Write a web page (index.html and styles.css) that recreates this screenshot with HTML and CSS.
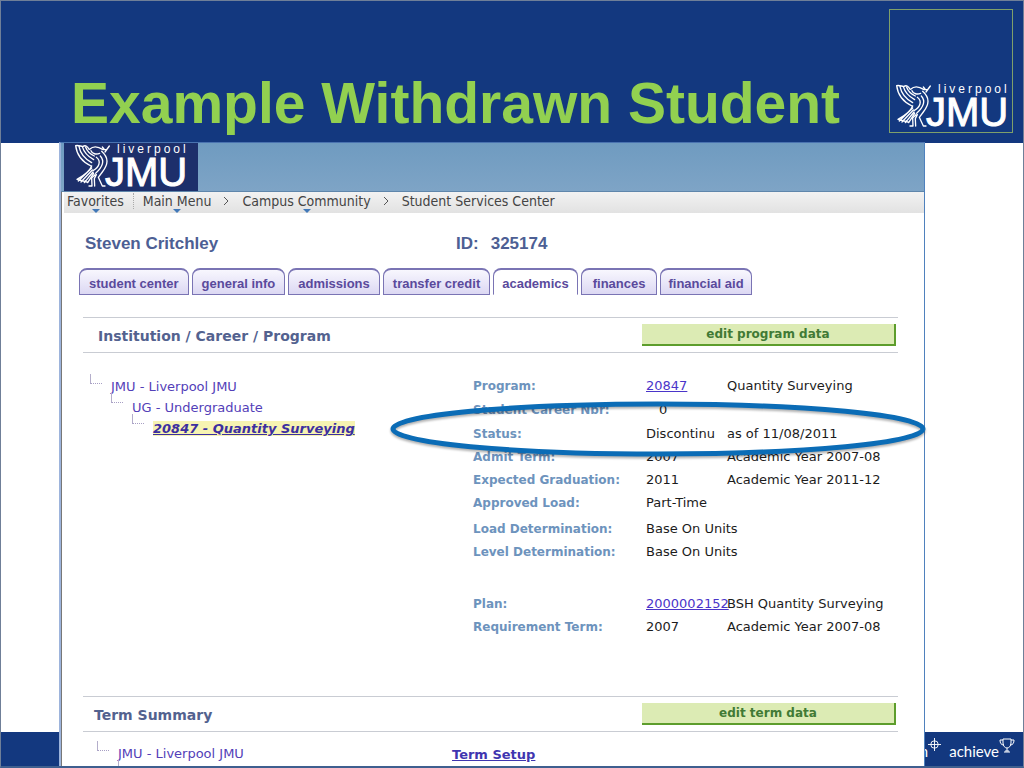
FILE: index.html
```html
<!DOCTYPE html>
<html lang="en">
<head>
    <meta charset="UTF-8">
    <meta name="viewport" content="width=device-width, initial-scale=1.0">
    <title>Example Withdrawn Student</title>
    <link rel="stylesheet" href="styles.css">
</head>
<body>
    <div class="slide">
        <header class="slide-header">
            <h1>Example Withdrawn Student</h1>
            <div class="logo-box">
                <svg class="logo" viewBox="0 0 116 48" role="img" aria-label="Liverpool JMU">
                    <!-- Liver bird, reused in the banner -->
                    <g id="bird" transform="translate(-15 -83) scale(.3333)" fill="none" stroke="#fff" stroke-width="4" stroke-linecap="round" stroke-linejoin="round">
                        <path d="M50 257C53 282 66 304 96 318M50 257C60 255 66 260 72 259M60 260C64 280 76 296 98 308M70 260C74 274 84 288 104 299M80 262C84 273 92 282 106 288M72 259C80 254 86 260 90 268"/>
                        <path d="M92 268C102 258 118 260 132 269L144 268M138 276L151 258M130 261L136 268M96 272C100 282 112 284 122 280"/>
                        <path d="M128 274C150 294 148 312 130 336L118 352L130 378H138M112 292C128 304 120 322 102 332M124 288C137 302 132 320 110 340"/>
                        <path d="M98 318C92 334 76 346 54 358M98 324L58 363M100 330L66 366M102 336L76 368M54 358L84 366M104 340L86 368"/>
                        <path d="M108 344L98 354L99 378H90M112 344L106 356L107 378"/>
                    </g>
                    <text class="logo-small" x="43" y="10">liverpool</text>
                    <text class="logo-big" x="31" y="43">JMU</text>
                </svg>
            </div>
        </header>

        <main class="window">
            <div class="banner">
                <div class="banner-logo">
                    <svg class="logo" viewBox="0 0 116 48" role="img" aria-label="Liverpool JMU">
                        <use href="#bird"/>
                        <text class="logo-small" x="43" y="10">liverpool</text>
                        <text class="logo-big" x="31" y="43">JMU</text>
                    </svg>
                </div>
            </div>
            <nav class="crumbs">
                <a href="#" class="menu favorites">Favorites</a>
                <a href="#" class="menu">Main Menu</a>
                <svg class="chevron" viewBox="0 0 6 10"><path d="M1 1l4 4-4 4"/></svg>
                <a href="#" class="menu">Campus Community</a>
                <svg class="chevron" viewBox="0 0 6 10"><path d="M1 1l4 4-4 4"/></svg>
                <a href="#">Student Services Center</a>
            </nav>

            <div class="content">
                <div class="student">
                    <span>Steven Critchley</span>
                    <span class="student-id"><span>ID:</span><span>325174</span></span>
                </div>

                <nav class="tabs">
                    <a href="#" class="tab">student center</a>
                    <a href="#" class="tab">general info</a>
                    <a href="#" class="tab">admissions</a>
                    <a href="#" class="tab">transfer credit</a>
                    <a href="#" class="tab active">academics</a>
                    <a href="#" class="tab wide">finances</a>
                    <a href="#" class="tab narrow">financial aid</a>
                </nav>

                <section class="section">
                    <div class="section-head">
                        <h2>Institution / Career / Program</h2>
                        <button type="button">edit program data</button>
                    </div>
                    <div class="columns program">
                        <ul class="tree">
                            <li><a href="#">JMU - Liverpool JMU</a>
                                <ul>
                                    <li><a href="#">UG - Undergraduate</a>
                                        <ul>
                                            <li><a href="#" class="selected">20847 - Quantity Surveying</a></li>
                                        </ul>
                                    </li>
                                </ul>
                            </li>
                        </ul>
                        <table class="details">
                            <tr><th scope="row">Program:</th><td><a href="#">20847</a></td><td>Quantity Surveying</td></tr>
                            <tr class="career"><th scope="row">Student Career Nbr:</th><td class="number">0</td><td></td></tr>
                            <tr><th scope="row">Status:</th><td>Discontinu</td><td>as of 11/08/2011</td></tr>
                            <tr><th scope="row">Admit Term:</th><td>2007</td><td>Academic Year 2007-08</td></tr>
                            <tr><th scope="row">Expected Graduation:</th><td>2011</td><td>Academic Year 2011-12</td></tr>
                            <tr><th scope="row">Approved Load:</th><td>Part-Time</td><td></td></tr>
                            <tr class="load"><th scope="row">Load Determination:</th><td colspan="2">Base On Units</td></tr>
                            <tr><th scope="row">Level Determination:</th><td colspan="2">Base On Units</td></tr>
                            <tr class="plan"><th scope="row">Plan:</th><td><a href="#">2000002152</a></td><td>BSH Quantity Surveying</td></tr>
                            <tr><th scope="row">Requirement Term:</th><td>2007</td><td>Academic Year 2007-08</td></tr>
                        </table>
                        <!-- Ring around the status row -->
                        <svg class="ring" viewBox="0 0 536 58" preserveAspectRatio="none" aria-hidden="true">
                            <ellipse cx="268" cy="29" rx="265" ry="25"/>
                        </svg>
                    </div>
                </section>

                <section class="section">
                    <div class="section-head term">
                        <h2>Term Summary</h2>
                        <button type="button">edit term data</button>
                    </div>
                    <div class="columns terms">
                        <ul class="tree">
                            <li><a href="#">JMU - Liverpool JMU</a>
                                <ul><li></li></ul>
                            </li>
                        </ul>
                        <a href="#" class="setup">Term Setup</a>
                    </div>
                </section>
            </div>
        </main>

        <footer class="slide-footer">
            <span>n</span>
            <svg class="target" viewBox="0 0 14 14"><circle cx="7" cy="7" r="4"/><path d="M7 0v14M0 7h14"/></svg>
            <span class="achieve">achieve</span>
            <svg class="cup" viewBox="0 0 16 15"><path d="M4 1h8v4c0 3-2 5-4 5S4 8 4 5zM4 2H1c0 3 1 5 4 5M12 2h3c0 3-1 5-4 5M8 10v3M5 14h6M6 13h4"/></svg>
        </footer>
    </div>
</body>
</html>
```

FILE: styles.css
```css
* {
    box-sizing: border-box;
}
body {
    margin: 0;
    font-family: "DejaVu Sans", Verdana, sans-serif;
    font-size: 13px;
    color: #1c1c1c;
    background-color: #fff;
}
h1, h2, ul {
    margin: 0;
    padding: 0;
}

/* Slide */
.slide {
    position: relative;
    display: flex;
    flex-direction: column;
    height: 100vh;
    overflow: hidden;
    border: 1px solid #6f7f98;
    border-bottom: 2px solid #3f5f8f;
}
.slide-header {
    display: flex;
    justify-content: space-between;
    align-items: flex-end;
    flex: none;
    height: 142px;
    padding: 0 10px 10px 70px;
    background-color: #13387f;
}
.slide-header h1 {
    font-family: "Liberation Sans", Arial, sans-serif;
    font-size: 57px;
    line-height: 60px;
    color: #92d050;
}
.logo-box {
    display: flex;
    align-items: flex-end;
    width: 124px;
    height: 124px;
    padding: 0 0 1px 5px;
    border: 1px solid #7fa06a;
}
.logo {
    display: block;
    width: 116px;
    height: 48px;
}
.logo-small, .logo-big {
    font-family: "Liberation Sans", Arial, sans-serif;
    fill: #fff;
}
.logo-small {
    font-size: 12px;
    letter-spacing: 3px;
}
.logo-big {
    font-size: 40px;
    stroke: #fff;
    stroke-width: 1px;
}
.slide-footer {
    position: absolute;
    right: 0;
    bottom: 0;
    left: 0;
    display: flex;
    justify-content: flex-end;
    align-items: center;
    height: 34px;
    padding: 4px 8px 0 0;
    font-family: Lato, sans-serif;
    font-size: 15px;
    color: #fff;
    background-color: #13387f;
}
.slide-footer svg {
    align-self: flex-start;
    margin-top: 2px;
    fill: none;
    stroke: #fff;
}
.target {
    width: 13px;
    height: 13px;
}
.achieve {
    margin-left: 8px;
}
.cup {
    width: 16px;
    height: 15px;
}

/* Application window */
.window {
    position: relative;
    z-index: 1;
    flex: 1;
    min-height: 0;
    margin: -1px 98px 0 58px;
    overflow-x: visible;
    overflow-y: clip;
    background-color: #fff;
    border-top: 1px solid #4a73b0;
    border-right: 1px solid #4f81bd;
    border-left: 2px solid #9db4dc;
    box-shadow: inset 1px 0 #777;
}
.banner {
    height: 49px;
    padding-left: 3px;
    background: linear-gradient(#6f9bc0, #7ea4c6);
    border-bottom: 1px solid #5f86ab;
}
.banner-logo {
    width: 134px;
    height: 48px;
    padding-left: 10px;
    background-color: #1d2f6b;
}
.crumbs {
    display: flex;
    align-items: center;
    height: 21px;
    margin-left: 3px;
    padding: 0 3px 3px;
    font-family: "DejaVu Sans Condensed", "DejaVu Sans", Tahoma, sans-serif;
    font-size: 14px;
    background: linear-gradient(#f2f2f2, #e2e2e2);
}
.crumbs a {
    position: relative;
    color: #444;
    text-decoration: none;
    white-space: nowrap;
}
.menu::after {
    content: "";
    position: absolute;
    bottom: -4px;
    left: 50%;
    margin-left: -4px;
    border: 4px solid transparent;
    border-top-color: #4178b8;
    border-bottom: 0;
}
.favorites {
    padding-right: 9px;
    margin-right: 9px;
    border-right: 1px dotted #aaa;
}
.favorites::after {
    margin-left: -8px;
}
.chevron {
    width: 6px;
    height: 10px;
    margin: 0 13px 0 12px;
    fill: none;
    stroke: #555;
}
.content {
    padding: 21px 26px 0 22px;
}
.student {
    display: flex;
    padding-left: 2px;
    font-family: "Liberation Sans", Arial, sans-serif;
    font-size: 17px;
    line-height: 20px;
    font-weight: bold;
    color: #4d5f94;
}
.student > span {
    flex: 0 0 371px;
}
.student-id {
    display: flex;
    gap: 12px;
}

/* Tabs */
.tabs {
    display: flex;
    gap: 3px;
    margin: 14px 0 0 -4px;
}
.tab {
    height: 27px;
    padding: 0 9px;
    font-family: "Liberation Sans", Arial, sans-serif;
    font-size: 13px;
    line-height: 27px;
    font-weight: bold;
    color: #5a4a9c;
    text-decoration: none;
    white-space: nowrap;
    background: linear-gradient(#f8f7fe, #dcd8f3);
    border: 1px solid #7a74b4;
    border-top-width: 2px;
    border-radius: 8px 8px 0 0;
}
.tab.wide {
    padding: 0 11px;
}
.tab.narrow {
    padding: 0 7px;
}
.tab.active {
    padding: 0 8px;
    background: #fff;
    border-bottom-color: #fff;
}

/* Sections */
.section-head {
    display: flex;
    justify-content: space-between;
    height: 36px;
    margin-top: 22px;
    padding: 6px 2px 0 15px;
    border-top: 1px solid #c9ccd3;
    border-bottom: 1px solid #c9ccd3;
}
.section-head.term {
    margin-top: 0;
    padding-left: 11px;
}
.section-head h2 {
    font-size: 14px;
    line-height: 24px;
    color: #53628f;
}
.section-head button {
    width: 254px;
    height: 22px;
    padding: 0;
    font-family: inherit;
    font-size: 12px;
    font-weight: bold;
    color: #417a35;
    background-color: #dcebb4;
    border: 0 solid #5d9d2c;
    border-width: 0 2px 2px 0;
}
.columns {
    position: relative;
    display: grid;
    grid-template-columns: 390px 1fr;
    align-items: start;
}
.program {
    height: 343px;
    padding-top: 21px;
}
.tree, .tree ul {
    list-style: none;
}
.tree {
    padding-left: 7px;
}
.tree li {
    position: relative;
    padding-left: 21px;
    line-height: 21px;
    white-space: nowrap;
}
.tree > li {
    padding-top: 2px;
}
.tree li::before {
    content: "";
    position: absolute;
    top: 0;
    left: 0;
    width: 11px;
    height: 9px;
    border-left: 1px solid #b4aecb;
    border-bottom: 1px dotted #a79fc4;
}
.tree ul li::before {
    top: -4px;
}
.tree a {
    color: #5340b8;
    text-decoration: none;
}
.tree a.selected {
    font-weight: bold;
    font-style: italic;
    color: #3c2fa0;
    text-decoration: underline;
    background-color: #f6f3b2;
}
.details {
    border-collapse: collapse;
    table-layout: fixed;
    width: 100%;
}
.details th {
    width: 173px;
    height: 23px;
    padding: 0;
    font-size: 12px;
    text-align: left;
    color: #6d93bd;
}
.details td {
    padding: 0;
    white-space: nowrap;
}
.details td:nth-child(2) {
    width: 81px;
}
.details .number {
    padding-left: 13px;
}
.details a {
    color: #4a35c9;
}
.details .career th {
    height: 25px;
}
.details .load th, .details .load td {
    height: 26px;
    padding-top: 3px;
}
.details .plan th, .details .plan td {
    height: 52px;
    padding-top: 29px;
}
.ring {
    position: absolute;
    top: 47px;
    right: -28px;
    width: 536px;
    height: 58px;
    overflow: visible;
    fill: none;
    stroke: #0b6cb6;
    stroke-width: 5px;
    filter: drop-shadow(0 2px 1px rgba(0, 0, 0, 0.3));
}
.terms {
    grid-template-columns: 369px 1fr;
    padding-top: 9px;
}
.terms .tree {
    padding-left: 14px;
}
.setup {
    padding-top: 6px;
    font-weight: bold;
    color: #3f35b0;
}
```
